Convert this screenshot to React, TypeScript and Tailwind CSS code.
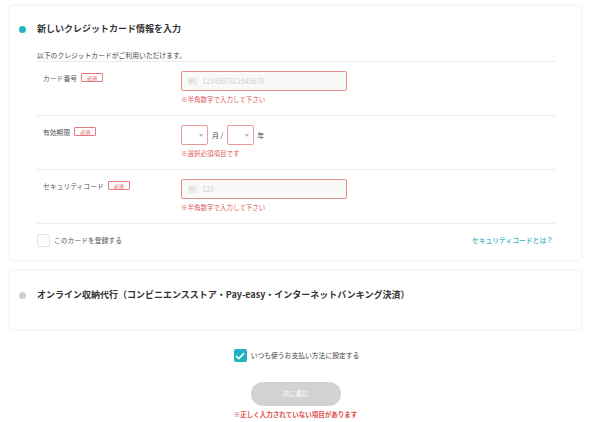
import React from "react";

const font = { fontFamily: '"Noto Sans CJK JP", "Noto Sans", sans-serif' };

function Badge() {
  return (
    <span className="ml-[4px] inline-flex h-[9px] w-[22px] items-center justify-center rounded-[1px] border border-[#e77b7b] text-[5px] leading-none text-[#e25b5b]">
      必須
    </span>
  );
}

function ErrorText({ children }: { children: React.ReactNode }) {
  return <p className="mt-[3px] text-[6.5px] leading-[10px] text-[#e05a5a]">{children}</p>;
}

function SelectBox() {
  return (
    <div className="flex h-[20px] w-[27px] items-center justify-end rounded-[2px] border border-[#e89a9a] bg-white pr-[4px]">
      <svg width="4" height="3" viewBox="0 0 4 3">
        <path d="M0 0 L4 0 L2 3 Z" fill="#b5b5b5" />
      </svg>
    </div>
  );
}

function Row({ label, children }: { label: string; children: React.ReactNode }) {
  return (
    <div className="flex border-t border-[#ececec] pt-[9px] pb-[11px]">
      <div className="mt-[1px] flex h-[10px] w-[144px] items-center pl-[6px] pt-[1px]">
        <span className="text-[6.8px] leading-[10px] text-[#555]">{label}</span>
        <Badge />
      </div>
      <div>{children}</div>
    </div>
  );
}

function TextInput({ placeholder }: { placeholder: string }) {
  return (
    <div className="flex h-[20px] w-[166px] items-center rounded-[2px] border border-[#e58c8c] bg-[#fbf8f8] px-[6px]">
      <span className="text-[7px] text-[#cfcfcf]">{placeholder}</span>
    </div>
  );
}

export default function App() {
  return (
    <div className="min-h-[422px] w-[591px] bg-white text-[#333]" style={font}>
      <div className="px-[10px] pt-[6px]">
        {/* credit card */}
        <div className="rounded-[3px] bg-white pt-[16px] pr-[26px] pb-[13px] pl-[9px] shadow-[0_0_3px_rgba(0,0,0,0.13)]">
          <div className="flex h-[14px] items-center">
            <span className="h-[7px] w-[7px] rounded-full bg-[#26b3bd]" />
            <h2 className="ml-[11px] text-[9px] leading-[14px] font-bold text-[#333]">
              新しいクレジットカード情報を入力
            </h2>
          </div>
          <div className="pl-[18px]">
            <p className="mt-[14px] text-[6.8px] leading-[10px] text-[#444]">
              以下のクレジットカードがご利用いただけます。
            </p>
            <div className="mt-[1px]">
              <Row label="カード番号">
                <TextInput placeholder="例）1234567812345678" />
                <ErrorText>※半角数字で入力して下さい</ErrorText>
              </Row>
              <Row label="有効期限">
                <div className="flex items-center">
                  <SelectBox />
                  <span className="mx-[4px] text-[7px] text-[#444]">月 /</span>
                  <SelectBox />
                  <span className="ml-[3px] text-[7px] text-[#444]">年</span>
                </div>
                <ErrorText>※選択必須項目です</ErrorText>
              </Row>
              <Row label="セキュリティコード">
                <TextInput placeholder="例）123" />
                <ErrorText>※半角数字で入力して下さい</ErrorText>
              </Row>
              <div className="flex items-center justify-between border-t border-[#ececec] pt-[10px]">
                <div className="flex items-center">
                  <span className="h-[13px] w-[13px] rounded-[2px] border border-[#e3e3e3] bg-white" />
                  <span className="ml-[4px] text-[6.8px] text-[#555]">このカードを登録する</span>
                </div>
                <a className="mr-[2px] text-[6.8px] font-medium text-[#3ab2c0]">セキュリティコードとは？</a>
              </div>
            </div>
          </div>
        </div>

        {/* online payment */}
        <div className="mt-[11px] rounded-[3px] bg-white pt-[17px] pb-[27px] pl-[9px] shadow-[0_0_3px_rgba(0,0,0,0.13)]">
          <div className="flex h-[14px] items-center">
            <span className="h-[7px] w-[7px] rounded-full bg-[#cfcfcf]" />
            <span className="ml-[11px] text-[9px] leading-[14px] font-bold text-[#333]">
              オンライン収納代行（コンビニエンスストア・Pay-easy・インターネットバンキング決済）
            </span>
          </div>
        </div>

        {/* footer */}
        <div className="mt-[20px] flex flex-col items-center">
          <div className="flex items-center pl-[2px]">
            <span className="flex h-[13px] w-[13px] items-center justify-center rounded-[2px] bg-[#22b3be]">
              <svg width="10" height="8" viewBox="0 0 10 8">
                <path d="M1 4 L3.8 6.6 L9 1.2" stroke="#fff" strokeWidth="1.6" fill="none" />
              </svg>
            </span>
            <span className="ml-[4px] text-[6.8px] text-[#444]">いつも使うお支払い方法に設定する</span>
          </div>
          <button className="mt-[20px] h-[24px] w-[90px] rounded-full bg-[#d2d2d2] text-[6.5px] text-white">
            次に進む
          </button>
          <p className="mt-[3px] text-[6.5px] leading-[10px] font-bold text-[#e04d4d]">
            ※正しく入力されていない項目があります
          </p>
        </div>
      </div>
    </div>
  );
}
